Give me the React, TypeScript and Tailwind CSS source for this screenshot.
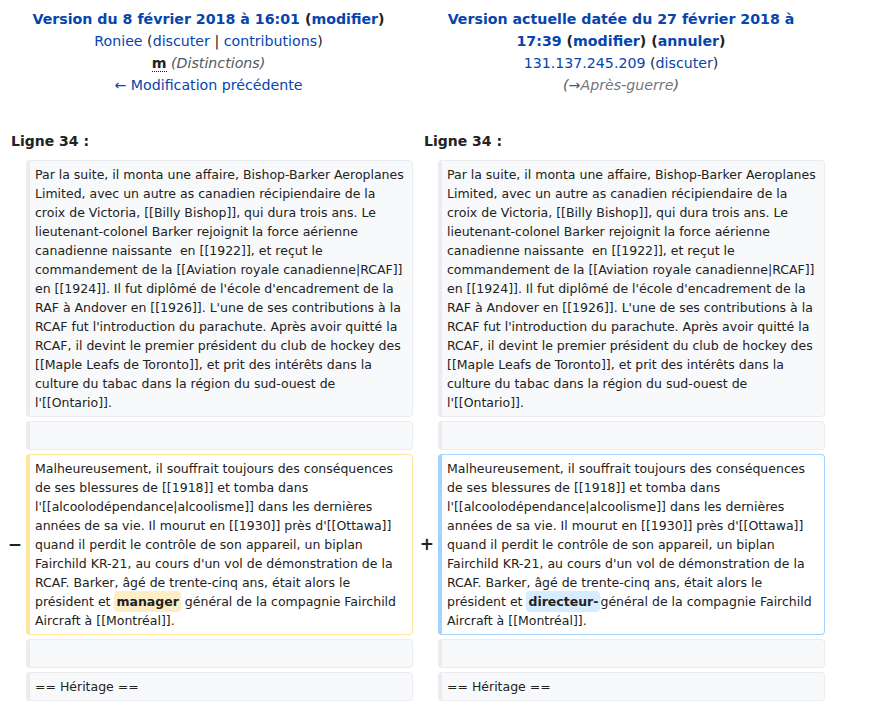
const oldText1 = `Par la suite, il monta une affaire, Bishop-Barker Aeroplanes Limited, avec un autre as canadien récipiendaire de la croix de Victoria, [[Billy Bishop]], qui dura trois ans. Le lieutenant-colonel Barker rejoignit la force aérienne canadienne naissante  en [[1922]], et reçut le commandement de la [[Aviation royale canadienne|RCAF]] en [[1924]]. Il fut diplômé de l'école d'encadrement de la RAF à Andover en [[1926]]. L'une de ses contributions à la RCAF fut l'introduction du parachute. Après avoir quitté la RCAF, il devint le premier président du club de hockey des [[Maple Leafs de Toronto]], et prit des intérêts dans la culture du tabac dans la région du sud-ouest de l'[[Ontario]].`;

const changedBefore = `Malheureusement, il souffrait toujours des conséquences de ses blessures de [[1918]] et tomba dans l'[[alcoolodépendance|alcoolisme]] dans les dernières années de sa vie. Il mourut en [[1930]] près d'[[Ottawa]] quand il perdit le contrôle de son appareil, un biplan Fairchild KR-21, au cours d'un vol de démonstration de la RCAF. Barker, âgé de trente-cinq ans, était alors le président et `;

const Context = ({ children }: { children?: React.ReactNode }) => (
  <div className="min-h-[29px] rounded-[4px] border border-l-4 border-[#eaecf0] bg-[#f8f9fa] px-[5px] py-[4px] text-[12.5px] leading-[19px] whitespace-pre-wrap break-words text-[#222]">
    {children}
  </div>
);

const Marker = ({ sign }: { sign?: string }) => (
  <div className="flex items-center justify-end text-[17px] font-bold text-[#222]">
    {sign}
  </div>
);

export default function App() {
  return (
    <div className="min-h-[705px] bg-white font-['DejaVu_Sans',sans-serif] text-[14px] text-[#222]">
      <div className="grid grid-cols-[18px_387px_17px_387px] gap-[4px] p-[4px]">
        {/* headers */}
        <div className="col-span-2 px-[8px] pt-[4px] text-center text-[14.2px] leading-[22px]">
          <div className="font-bold">
            <span className="text-[#0645ad]">Version du 8 février 2018 à 16:01</span>{" "}
            (<span className="text-[#0645ad]">modifier</span>)
          </div>
          <div>
            <span className="text-[#0645ad]">Roniee</span> (
            <span className="text-[#0645ad]">discuter</span> |{" "}
            <span className="text-[#0645ad]">contributions</span>)
          </div>
          <div>
            <abbr className="font-bold no-underline border-b border-dotted border-[#222]">m</abbr>{" "}
            <span className="italic text-[#54595d]">(Distinctions)</span>
          </div>
          <div className="text-[#0645ad]">← Modification précédente</div>
        </div>
        <div className="col-span-2 px-[8px] pt-[4px] text-center text-[14.2px] leading-[22px]">
          <div className="font-bold">
            <span className="text-[#0645ad]">Version actuelle datée du 27 février 2018 à 17:39</span>{" "}
            (<span className="text-[#0645ad]">modifier</span>) (
            <span className="text-[#0645ad]">annuler</span>)
          </div>
          <div>
            <span className="text-[#0645ad]">131.137.245.209</span> (
            <span className="text-[#0645ad]">discuter</span>)
          </div>
          <div className="italic text-[#54595d]">
            (→<span className="text-[#72777d]">Après-guerre</span>)
          </div>
        </div>

        {/* line numbers */}
        <div className="col-span-2 pt-[31px] pb-[4px] pl-[7px] font-bold">Ligne 34 :</div>
        <div className="col-span-2 pt-[31px] pb-[4px] pl-[7px] font-bold">Ligne 34 :</div>

        {/* context paragraph */}
        <Marker />
        <Context>{oldText1}</Context>
        <Marker />
        <Context>{oldText1}</Context>

        <Marker />
        <Context />
        <Marker />
        <Context />

        {/* changed paragraph */}
        <Marker sign="−" />
        <div className="rounded-[4px] border border-l-4 border-[#ffe49c] px-[5px] py-[4px] text-[12.5px] leading-[19px] whitespace-pre-wrap break-words">
          {changedBefore}
          <span className="rounded-[4px] bg-[#feeec8] px-[2px] py-[3px] font-bold">manager</span>
          {` général de la compagnie Fairchild Aircraft à [[Montréal]].`}
        </div>
        <Marker sign="+" />
        <div className="rounded-[4px] border border-l-4 border-[#a3d3ff] px-[5px] py-[4px] text-[12.5px] leading-[19px] whitespace-pre-wrap break-words">
          {changedBefore}
          <span className="rounded-[4px] bg-[#d8ecff] px-[2px] py-[3px] font-bold">directeur-</span>
          {`général de la compagnie Fairchild Aircraft à [[Montréal]].`}
        </div>

        <Marker />
        <Context />
        <Marker />
        <Context />

        <Marker />
        <Context>== Héritage ==</Context>
        <Marker />
        <Context>== Héritage ==</Context>
      </div>
    </div>
  );
}
